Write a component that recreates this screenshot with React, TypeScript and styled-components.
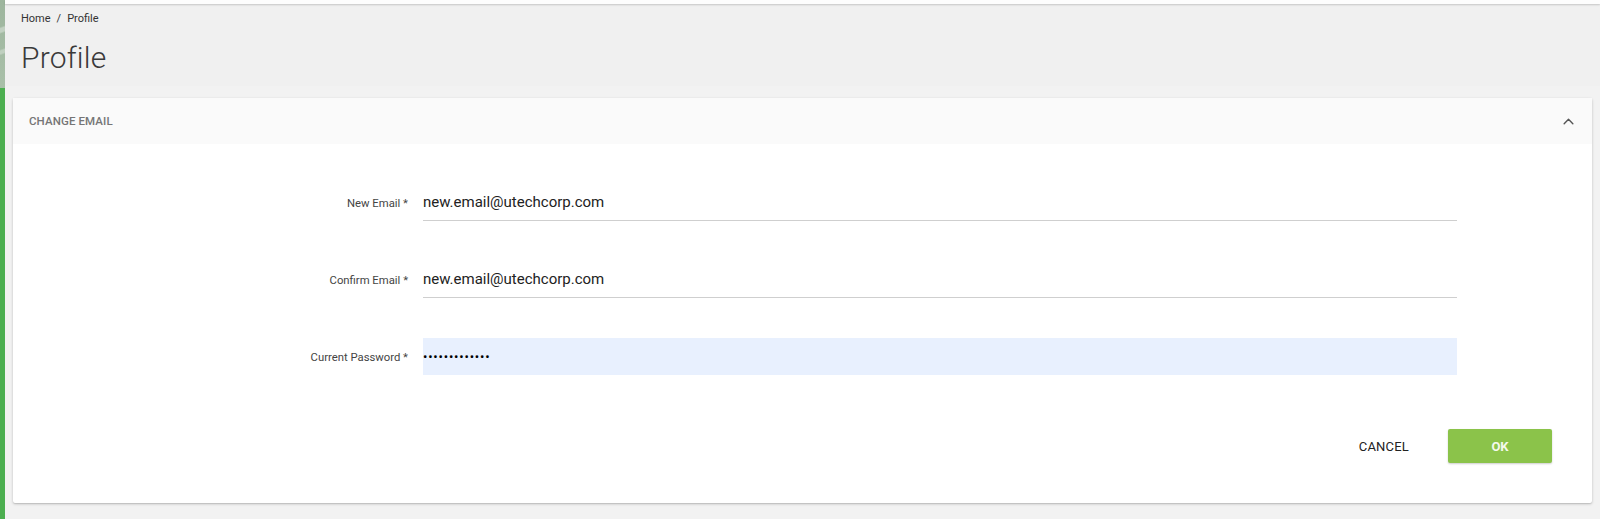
import React from "react";
import styled, { createGlobalStyle } from "styled-components";

const Global = createGlobalStyle`
  html, body { margin: 0; padding: 0; background: #f2f2f2; }
  body { font-family: Roboto, "Liberation Sans", Arial, sans-serif; }
  * { box-sizing: border-box; }
`;

const Shell = styled.div`
  display: flex;
  min-height: 519px;
`;

const SideStrip = styled.div`
  width: 5px;
  flex: 0 0 5px;
  background:
    linear-gradient(160deg, transparent 0 30%, rgba(255,255,255,0.35) 32% 36%, transparent 38% 55%, rgba(255,255,255,0.3) 57% 60%, transparent 62%) 0 0 / 5px 88px no-repeat,
    linear-gradient(180deg, #9db59d 0, #a9c0a9 88px, #4caf50 88px, #4caf50 100%);
`;

const Main = styled.div`
  flex: 1;
  display: flex;
  flex-direction: column;
`;

const TopBar = styled.div`
  height: 4px;
  background: #fdfdfd;
  box-shadow: 0 1px 2px rgba(0, 0, 0, 0.18);
  position: relative;
  z-index: 1;
`;

const PageHeader = styled.div`
  background: #f0f0f0;
  padding: 8px 16px 0 16px;
  height: 82px;
`;

const Crumbs = styled.div`
  font-size: 11px;
  color: #333;
  line-height: 13px;
  display: flex;
  gap: 6px;
`;

const Title = styled.h1`
  margin: 15px 0 0 0;
  font-size: 30px;
  font-weight: 300;
  color: #3a3a3a;
  line-height: 36px;
  letter-spacing: 0.2px;
`;

const Content = styled.div`
  padding: 12px 8px 16px 8px;
`;

const Card = styled.section`
  background: #fff;
  box-shadow: 0 1px 3px rgba(0, 0, 0, 0.2), 0 1px 1px rgba(0, 0, 0, 0.08);
  border-radius: 2px;
`;

const CardHeader = styled.div`
  height: 46px;
  background: #fafafa;
  display: flex;
  align-items: center;
  justify-content: space-between;
  padding: 0 17px 0 16px;
`;

const CardTitle = styled.span`
  font-size: 11.5px;
  font-weight: 500;
  color: #757575;
  letter-spacing: 0.1px;
`;

const Chevron = styled.svg`
  width: 13px;
  height: 13px;
  color: #555;
`;

const CardBody = styled.div`
  padding: 40px 40px 40px 0;
  display: flex;
  flex-direction: column;
`;

const Form = styled.div`
  display: grid;
  grid-template-columns: 395px 1034px;
  column-gap: 15px;
  row-gap: 40px;
  align-items: center;
`;

const Label = styled.label`
  text-align: right;
  font-size: 11.3px;
  color: #444;
  padding-top: 2px;
`;

const Field = styled.input<{ $filled?: boolean }>`
  height: 37px;
  border: none;
  border-bottom: ${(p) => (p.$filled ? "none" : "1px solid #cfcfcf")};
  background: ${(p) => (p.$filled ? "#e8f0fe" : "transparent")};
  font-family: Roboto, "Liberation Sans", Arial, sans-serif;
  font-size: 15px;
  color: #222;
  padding: 0 0 0 0;
  outline: none;
  width: 100%;
`;

const PasswordField = styled(Field)`
  font-size: 13px;
  letter-spacing: 0.8px;
  color: #000;
`;

const Actions = styled.div`
  display: flex;
  justify-content: flex-end;
  align-items: center;
  gap: 39px;
  margin-top: 54px;
`;

const TextButton = styled.button`
  background: none;
  border: none;
  font-family: Roboto, "Liberation Sans", Arial, sans-serif;
  font-size: 13px;
  color: #222;
  padding: 0;
  letter-spacing: 0.2px;
`;

const PrimaryButton = styled.button`
  width: 104px;
  height: 34px;
  background: #8bc34a;
  border: none;
  border-radius: 2px;
  color: #f4faee;
  font-family: Roboto, "Liberation Sans", Arial, sans-serif;
  font-size: 13px;
  font-weight: 700;
  box-shadow: 0 1px 2px rgba(0, 0, 0, 0.2);
`;

export default function App() {
  return (
    <>
      <Global />
      <Shell>
        <SideStrip />
        <Main>
          <TopBar />
          <PageHeader>
            <Crumbs>
              <span>Home</span>
              <span>/</span>
              <span>Profile</span>
            </Crumbs>
            <Title>Profile</Title>
          </PageHeader>
          <Content>
            <Card>
              <CardHeader>
                <CardTitle>CHANGE EMAIL</CardTitle>
                <Chevron viewBox="0 0 24 24" fill="none" stroke="currentColor" strokeWidth="2.6" strokeLinecap="round" strokeLinejoin="round">
                  <path d="M4 16l8-8 8 8" />
                </Chevron>
              </CardHeader>
              <CardBody>
                <Form>
                  <Label>New Email *</Label>
                  <Field readOnly value="new.email@utechcorp.com" />
                  <Label>Confirm Email *</Label>
                  <Field readOnly value="new.email@utechcorp.com" />
                  <Label>Current Password *</Label>
                  <PasswordField $filled type="password" readOnly value="xxxxxxxxxxxxx" />
                </Form>
                <Actions>
                  <TextButton>CANCEL</TextButton>
                  <PrimaryButton>OK</PrimaryButton>
                </Actions>
              </CardBody>
            </Card>
          </Content>
        </Main>
      </Shell>
    </>
  );
}
